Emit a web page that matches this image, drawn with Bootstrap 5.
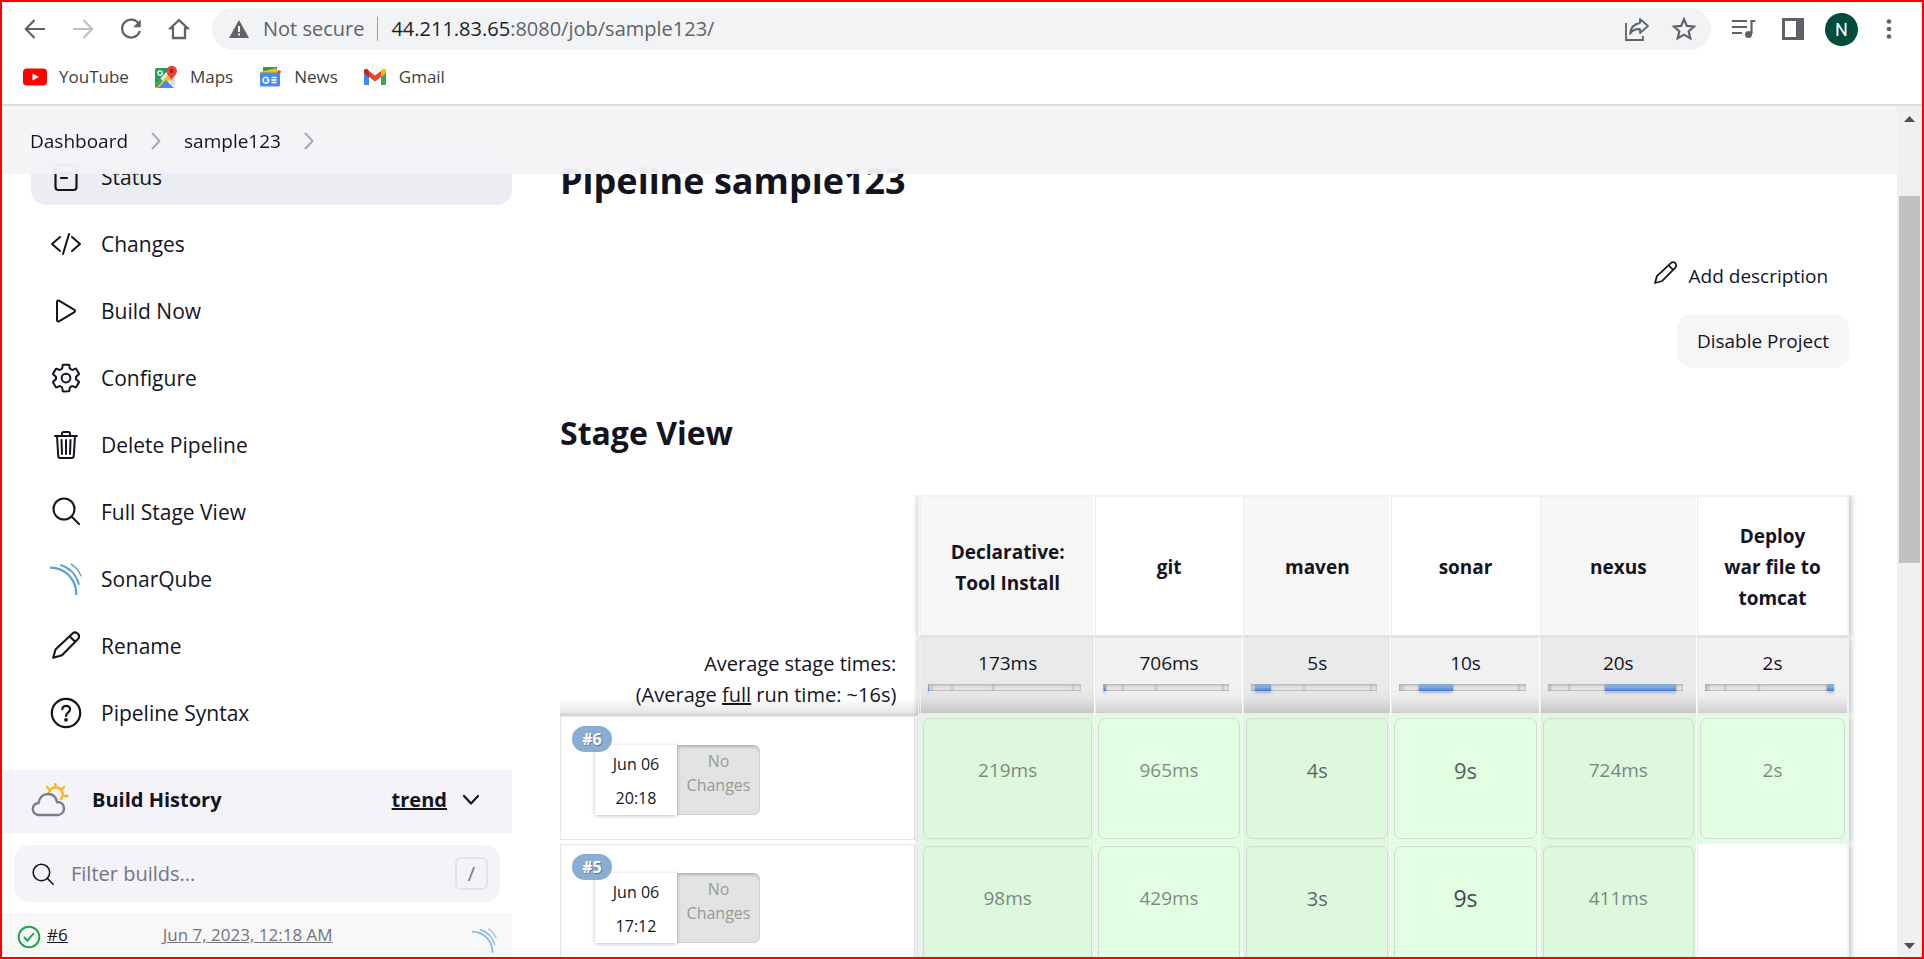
<!DOCTYPE html>
<html lang="en">
<head>
<meta charset="utf-8">
<meta name="viewport" content="width=device-width, initial-scale=1">
<title>sample123 [Jenkins]</title>
<link href="https://cdn.jsdelivr.net/npm/bootstrap@5.3.0/dist/css/bootstrap.min.css" rel="stylesheet">
<style>
  :root { --ink: #14141f; --soft: #f3f3f8; --chrome: #5f6368; }
  body { font-family: "Open Sans", "Noto Sans", sans-serif; font-size: 19px; line-height: 30px; color: var(--ink); background: #fff; }
  svg { flex: none; display: block; }
  a { color: inherit; }
  .window { height: 100vh; border: 2px solid red; overflow: hidden; }

  /* browser chrome */
  .browser-bar { color: var(--chrome); padding: 6px 23px 0 21px; height: 48px; }
  .browser-bar button, .plain-btn { border: 0; background: none; padding: 0; color: inherit; }
  .browser-bar .nav-forward { color: #bdc1c6; }
  .nav-icons { gap: 24px; margin-right: 21px; }
  .tool-icons { gap: 21px; margin-left: 20px; }
  .omnibox { background: #f1f3f4; border-radius: 21px; height: 42px; padding: 0 14px 0 16px; gap: 13px; font-size: 20px; }
  .url-host { color: #202124; }
  .url-line { width: 1px; height: 24px; background: #9aa0a6; }
  .browser-bar .avatar-dot { width: 33px; height: 33px; border-radius: 50%; background: #004d40; color: #fff; font: 18px/33px Roboto, sans-serif; text-align: center; }
  .bookmarks { height: 56px; padding: 0 21px; gap: 25px; font-size: 17px; color: #3c4043; border-bottom: 2px solid #dcdddc; }
  .bookmarks a { gap: 12px; }

  /* page */
  .crumbs { height: 68px; padding: 2px 28px 0; gap: 23px; background: rgba(244, 244, 247, .9); backdrop-filter: blur(15px); position: relative; z-index: 2; font-size: 19px; }
  .scroll-area { margin-top: -25px; gap: 48px; }
  .side { width: 510px; }
  .task { height: 56px; margin: 0 0 11px 29px; padding-left: 19px; gap: 19px; border-radius: 15px; font-size: 21px; }
  .task.current { background: #ecedf3; }
  .task-list { margin-bottom: 29px; }
  .history-head { background: var(--soft); height: 63px; padding: 0 33px 3px 29px; font-size: 20px; }
  .history-head h2 { font-size: 20px; font-weight: 700; line-height: 30px; margin: 0 0 0 23px; }
  .filter-box { background: var(--soft); border-radius: 15px; height: 57px; margin: 12px; padding: 0 12px 0 18px; gap: 17px; font-size: 20px; }
  .filter-box input { border: 0; background: none; outline: 0; padding: 0; }
  .filter-box input::placeholder { color: #73738c; opacity: 1; }
  .key-hint { width: 33px; height: 33px; border: 2px solid #e3e3ec; border-radius: 6px; color: #73738c; font-size: 20px; line-height: 28px; text-align: center; background: none; padding: 0; font-family: inherit; }
  .build-row { background: #f8f8f8; border-top: 1px solid #f0f0f5; height: 60px; padding: 5px 15px 0; gap: 6px; font-size: 17px; }
  .build-when { color: #737378; margin-left: 89px; }
  .build-sonar { opacity: .7; }

  .content { padding-right: 48px; }
  h1 { font-size: 36px; line-height: 48px; font-weight: 700; margin: 8px 0 52px; }
  h3.section { font-size: 32px; line-height: 44px; font-weight: 700; margin: 43px 0 40px; }
  .desc-link { font-size: 19px; padding-right: 21px; gap: 12px; line-height: 38px; }
  .disable-btn { background: #f6f6f9; border-radius: 15px; height: 54px; padding: 0 20px; margin-top: 19px; font-size: 19px; color: var(--ink); border: 0; }

  .stages { width: 100%; table-layout: fixed; border-collapse: separate; border-spacing: 0; line-height: 31px; }
  .stages th, .stages td { padding: 0; text-align: center; }
  .stages .st { border-left: 1px solid #ececec; border-right: 1px solid #fff; }
  .stages .st.first { box-shadow: -2px 0 4px rgba(0,0,0,.14); border-left: 3px double #efefef; clip-path: inset(0 0 0 -8px); }
  .stages .st.last { box-shadow: 3px 0 5px rgba(0,0,0,.2); border-right: 2px solid #f2f2f2; clip-path: inset(0 -10px 0 0); }
  .stages thead .st { height: 143px; vertical-align: middle; font-weight: 700; border-top: 2px solid #f1f1f1; border-bottom: 3px solid #e2e2e2; padding: 3px 16px 0; }
  .stages .odd { background: #f7f7f7; }
  .avg-row .st { height: 78px; background: linear-gradient(#f1f1f1 65%, #ededed 80%, #cfcfcf); vertical-align: top; padding: 10px 0 0; border-bottom: 3px double #eee; }
  .avg-row .st.odd { background: linear-gradient(#eaeaea 65%, #e4e4e4 80%, #c6c6c6); }
  .avg-row .legend { height: 78px; text-align: right; vertical-align: top; padding: 10px 22px 0 0; font-size: 20px; border-bottom: 3px solid #d9d9d9; background: linear-gradient(#fff 80%, #e6e6e6); }
  .times { height: 7px; margin: 5px 13px 0 7px; }
  .times i { min-width: 1px; height: 7px; background: #e4e4e4; box-shadow: inset 0 1px 3px rgba(0,0,0,.28), inset 0 -1px 0 #c9c9c9; }
  .times i.on { background: linear-gradient(#86abd6 45%, #3f78dc); box-shadow: 0 2px 3px rgba(60,90,150,.35); }
  .run-cell { height: 128px; vertical-align: top; }
  .run-box { height: 124px; margin-right: 3px; margin-bottom: 2px; border: 1px solid #e6e6e6; padding: 28px 0 0 34px; position: relative; text-align: center; font-size: 16px; line-height: 34px; }
  .run-badge { position: absolute; left: 11px; top: 9px; height: 26px; width: 40px; border-radius: 13px; background: #8aadd2; color: #fff; font-size: 16px; line-height: 26px; font-weight: 700; text-shadow: 1px 1px 1px rgba(0,0,0,.3); }
  .run-date { width: 82px; height: 70px; padding-top: 2px; background: #fff; box-shadow: 0 1px 4px rgba(0,0,0,.25); }
  .run-changes { width: 83px; height: 70px; border-radius: 0 7px 7px 0; background: #e3e3e3; color: #999; line-height: 24px; padding: 4px 0 0; box-shadow: inset 1px 2px 3px rgba(0,0,0,.22), inset -1px -1px 0 #d5d5d5; }
  .stages td.ok { background: #e3ffe3; height: 128px; border-bottom: 3px double #efefef; padding: 2px; }
  .stages td.ok.odd { background: #ddf8dd; }
  .ok-box { height: 121px; border: 1px solid #cfdccf; border-radius: 7px; padding-top: 36px; }
  .ok-box span { opacity: .5; }
  .ok-box .mid { opacity: .65; font-size: 20px; }
  .ok-box .big { opacity: .7; font-size: 22px; }
  .ok-box .huge { opacity: .8; font-size: 23px; }

  .scroll-track { width: 25px; background: #f0f0f0; padding: 10px 2px 8px; }
  .scroll-thumb { flex: 0 0 44%; background: #c1c1c1; width: 21px; margin-top: 74px; }
</style>
</head>
<body>
<svg width="0" height="0" class="position-absolute" aria-hidden="true">
  <symbol id="i-pencil" viewBox="0 0 28 28"><path d="M1.200 26.800 L3.500 18.500 L20.500 2.500 A3.900 3.900 0 0 1 26 8 L10 24.300 Z M17.800 5.400 L23 10.600" fill="none" stroke="currentColor" stroke-width="2.100" stroke-linejoin="round"/></symbol>
  <symbol id="i-search" viewBox="0 0 28 28"><circle cx="12" cy="12" r="10.500" fill="none" stroke="currentColor" stroke-width="2"/><path d="M19.500 19.500 27 27" stroke="currentColor" stroke-width="2" stroke-linecap="round"/></symbol>
  <symbol id="i-sonar" viewBox="0 0 34 34"><g fill="none" stroke="#549fd8"><path d="M0 5C16 5 28 17 28 34" stroke-width="2.300"/><path d="M11 2C21 5 28 13 31 23" stroke-width="1.900"/><path d="M22 1C27 4 31 9 33 14" stroke-width="1.500"/></g></symbol>
  <symbol id="i-chev" viewBox="0 0 10 18"><path d="M1.500 1.500 8.500 9l-7 7.500" fill="none" stroke="#a9a9bb" stroke-width="2" stroke-linecap="round" stroke-linejoin="round"/></symbol>
</svg>

<div class="window d-flex flex-column">
  <header>
    <div class="browser-bar d-flex align-items-center">
      <div class="nav-icons d-flex align-items-center">
        <button aria-label="Back"><svg width="24" height="24" viewBox="0 0 24 24" fill="none" stroke="currentColor" stroke-width="2.200"><path d="M22 12H3M11.500 3 2.800 12l8.700 9"/></svg></button>
        <button class="nav-forward" aria-label="Forward"><svg width="24" height="24" viewBox="0 0 24 24" fill="none" stroke="currentColor" stroke-width="2.200"><path d="M2 12h19M12.500 3l8.700 9-8.700 9"/></svg></button>
        <button aria-label="Reload"><svg width="24" height="24" viewBox="0 0 24 24" fill="none" stroke="currentColor" stroke-width="2.300"><path d="M20 7.200A9 9 0 1 0 20.800 14"/><path d="M21.800 2.500v7.800H14z" fill="currentColor" stroke="none"/></svg></button>
        <button aria-label="Home"><svg width="24" height="24" viewBox="0 0 24 24" fill="none" stroke="currentColor" stroke-width="2.300"><path d="M12 3 3.500 11.200H6V21h12v-9.800h2.500z"/></svg></button>
      </div>
      <div class="omnibox d-flex align-items-center flex-grow-1">
        <svg width="22" height="20" viewBox="0 0 22 20"><path d="M11 1 21 19H1z" fill="#5f6368"/><path d="M11 7v6M11 14.500v2" stroke="#f1f3f4" stroke-width="2"/></svg>
        <span>Not secure</span>
        <span class="url-line"></span>
        <span class="flex-grow-1"><span class="url-host">44.211.83.65</span>:8080/job/sample123/</span>
        <button aria-label="Share" class="me-2"><svg width="26" height="26" viewBox="0 0 26 26" fill="none" stroke="currentColor" stroke-width="1.800"><path d="M2 7v17h17v-4"/><path d="M16 3l8 7-8 7v-4c-5-.200-8 1.500-10 5 .500-6 4-10 10-11z" stroke-linejoin="round"/></svg></button>
        <button aria-label="Bookmark"><svg width="26" height="26" viewBox="0 0 24 24" fill="none" stroke="currentColor" stroke-width="2"><path d="M12 3l2.700 6.100 6.600.600-5 4.400 1.500 6.500L12 17.200l-5.800 3.400 1.500-6.500-5-4.400 6.600-.600z"/></svg></button>
      </div>
      <div class="tool-icons d-flex align-items-center">
        <button aria-label="Media" class="me-1"><svg width="26" height="24" viewBox="0 0 26 24" fill="none" stroke="currentColor" stroke-width="2.200"><path d="M1 4h15M1 10h15M1 16h10"/><path d="M24.500 4H20.500v13"/><circle cx="17.500" cy="17.500" r="3.500" fill="currentColor" stroke="none"/></svg></button>
        <button aria-label="Side panel"><svg width="22" height="22" viewBox="0 0 22 22"><path d="M0 0h22v22H0zM3 3v16h11V3z" fill="currentColor" fill-rule="evenodd"/></svg></button>
        <button class="avatar-dot" aria-label="Profile">N</button>
        <button aria-label="Menu"><svg width="20" height="22" viewBox="0 0 20 22" fill="currentColor"><circle cx="10" cy="3.500" r="2.300"/><circle cx="10" cy="11" r="2.300"/><circle cx="10" cy="18.500" r="2.300"/></svg></button>
      </div>
    </div>
    <nav class="bookmarks d-flex align-items-center">
      <a href="#" class="d-flex align-items-center text-decoration-none"><svg width="24" height="18" viewBox="0 0 24 18"><rect width="24" height="17" y=".500" rx="4" fill="#f00"/><path d="M9.500 5.500v7L16 9z" fill="#fff"/></svg>YouTube</a>
      <a href="#" class="d-flex align-items-center text-decoration-none"><svg width="24" height="24" viewBox="0 0 24 24"><path d="M3 3h18v18a2 2 0 0 1-2 2H3a2 2 0 0 1-2-2V5a2 2 0 0 1 2-2z" fill="#e8eaed"/><path d="M1 5a2 2 0 0 1 2-2h13L1 19z" fill="#1e9e57"/><path d="M1 18 6 13l3 3-6 7a2 2 0 0 1-2-2z" fill="#34a853"/><path d="m4 21 13-14 4 4-8 6-2-2-7 8z" fill="#fbbc04"/><path d="M4 23 11.800 15l8 8z" fill="#4a89f3"/><path d="m14 15 7-5v11z" fill="#dadce0"/><circle cx="6" cy="8" r="2.200" fill="none" stroke="#fff" stroke-width="1.300"/><path d="M17.500 16c-.500-4-5-5.500-5-10a5 5 0 0 1 10.500 0c0 4.500-5 6-5.500 10z" fill="#ea4335"/><circle cx="17.700" cy="6" r="1.900" fill="#a11"/></svg>Maps</a>
      <a href="#" class="d-flex align-items-center text-decoration-none"><svg width="24" height="22" viewBox="0 0 24 22"><path d="M5 1h14v8H5z" fill="#1e9e57"/><path d="M2 6 18 2l2 6H3z" fill="#fbbc04"/><path d="M20 4l3 1-2 7h-4z" fill="#ea4335"/><rect x="2" y="6.500" width="20" height="14" rx="1.500" fill="#4a8af4"/><path d="M10.500 12.500A3 3 0 1 0 11 14H8.500" fill="none" stroke="#fff" stroke-width="1.500"/><path d="M13.500 11.500h5M13.500 14h5M13.500 16.500h5" stroke="#fff" stroke-width="1.300"/></svg>News</a>
      <a href="#" class="d-flex align-items-center text-decoration-none"><svg width="24" height="18" viewBox="0 0 24 18"><path d="M1 4v12a1 1 0 0 0 1 1h4V7z" fill="#4285f4"/><path d="M23 4v12a1 1 0 0 1-1 1h-4V7z" fill="#34a853"/><path d="M18 3v6l5-4V3c0-2-2-3-4-1.500z" fill="#fbbc04"/><path d="M1 3v2l5 4V3L5 1.500C3 0 1 1 1 3z" fill="#c5221f"/><path d="M6 3v6l6 4.500L18 9V3l-6 4.500z" fill="#ea4335"/></svg>Gmail</a>
    </nav>
  </header>

  <div class="d-flex flex-grow-1 overflow-hidden">
    <div class="flex-grow-1 overflow-hidden">
      <nav class="crumbs d-flex align-items-center" aria-label="Breadcrumb">
        <a href="#" class="text-decoration-none">Dashboard</a>
        <svg width="10" height="18"><use href="#i-chev"/></svg>
        <a href="#" class="text-decoration-none">sample123</a>
        <svg width="10" height="18"><use href="#i-chev"/></svg>
      </nav>
      <div class="scroll-area d-flex">
        <aside class="side flex-shrink-0">
          <nav class="task-list">
            <a href="#" class="task current d-flex align-items-center text-decoration-none"><svg width="32" height="32" viewBox="0 0 32 32" fill="none" stroke="currentColor" stroke-width="2.200" stroke-linecap="round"><rect x="5.500" y="4" width="21" height="25" rx="3"/><path d="M11 12h10M11 17h6"/></svg>Status</a>
            <a href="#" class="task d-flex align-items-center text-decoration-none"><svg width="32" height="32" viewBox="0 0 512 512" fill="none" stroke="currentColor" stroke-width="32" stroke-linecap="round" stroke-linejoin="round"><path d="M160 368 32 256 160 144M352 368 480 256 352 144M304 96 208 416"/></svg>Changes</a>
            <a href="#" class="task d-flex align-items-center text-decoration-none"><svg width="32" height="32" viewBox="0 0 512 512" fill="none" stroke="currentColor" stroke-width="32"><path d="M112 111v290c0 17.440 17 28.520 31 20.160l247.900-148.370c12.120-7.250 12.120-26.330 0-33.580L143 90.840c-14-8.360-31 2.720-31 20.160z"/></svg>Build Now</a>
            <a href="#" class="task d-flex align-items-center text-decoration-none"><svg width="32" height="32" viewBox="0 0 512 512" fill="none" stroke="currentColor" stroke-width="32" stroke-linecap="round" stroke-linejoin="round"><circle cx="256" cy="256" r="70"/><path d="M416.390 256a154.340 154.340 0 01-1.530 20.790l45.210 35.460a10.810 10.810 0 012.450 13.750l-42.770 74a10.810 10.810 0 01-13.140 4.590l-44.900-18.080a16.110 16.110 0 00-15.170 1.750A164.480 164.480 0 01325 400.800a15.940 15.940 0 00-8.820 12.140l-6.730 47.890a11.080 11.080 0 01-10.680 9.170h-85.540a11.110 11.110 0 01-10.690-8.870l-6.720-47.820a16.070 16.070 0 00-9-12.220 155.300 155.300 0 01-21.460-12.570 16 16 0 00-15.110-1.710l-44.890 18.070a10.810 10.810 0 01-13.140-4.580l-42.770-74a10.800 10.800 0 012.450-13.750l38.210-30a16.050 16.050 0 006-14.080c-.360-4.170-.580-8.330-.580-12.500s.210-8.270.580-12.350a16 16 0 00-6.070-13.940l-38.190-30A10.810 10.810 0 0149.480 186l42.770-74a10.810 10.810 0 0113.140-4.590l44.900 18.080a16.110 16.110 0 0015.170-1.750A164.480 164.480 0 01187 111.200a15.940 15.940 0 008.820-12.140l6.730-47.890A11.080 11.080 0 01213.230 42h85.540a11.110 11.110 0 0110.690 8.870l6.720 47.820a16.070 16.070 0 009 12.220 155.300 155.300 0 0121.460 12.570 16 16 0 0015.110 1.710l44.890-18.070a10.810 10.810 0 0113.140 4.580l42.770 74a10.800 10.800 0 01-2.450 13.750l-38.210 30a16.050 16.050 0 00-6.050 14.080c.330 4.140.550 8.300.550 12.470z"/></svg>Configure</a>
            <a href="#" class="task d-flex align-items-center text-decoration-none"><svg width="32" height="32" viewBox="0 0 512 512" fill="none" stroke="currentColor" stroke-width="32" stroke-linecap="round" stroke-linejoin="round"><path d="M112 112l20 320c.950 18.490 14.400 32 32 32h184c17.670 0 30.870-13.510 32-32l20-320M80 112h352M192 112V72a23.930 23.930 0 0124-24h80a23.930 23.930 0 0124 24v40M256 176v224M184 176l8 224M328 176l-8 224"/></svg>Delete Pipeline</a>
            <a href="#" class="task d-flex align-items-center text-decoration-none"><svg width="32" height="32" viewBox="-2 -1 32 32"><use href="#i-search" width="28" height="28"/></svg>Full Stage View</a>
            <a href="#" class="task d-flex align-items-center text-decoration-none"><svg width="32" height="34"><use href="#i-sonar"/></svg>SonarQube</a>
            <a href="#" class="task d-flex align-items-center text-decoration-none"><svg width="32" height="32" viewBox="-2 -1 32 32"><use href="#i-pencil" width="28" height="28"/></svg>Rename</a>
            <a href="#" class="task d-flex align-items-center text-decoration-none"><svg width="32" height="32" viewBox="0 0 32 32" fill="none" stroke="currentColor" stroke-width="2.200" stroke-linecap="round"><circle cx="16" cy="16" r="14.200"/><path d="M12.300 12.200c.100-4.500 7.700-4.300 7.700.200 0 3-4 3.200-4 6.600"/><circle cx="16" cy="22.800" r=".800" fill="currentColor"/></svg>Pipeline Syntax</a>
          </nav>
          <div class="history-head d-flex align-items-center">
            <svg width="38" height="34" viewBox="0 0 38 34" fill="none" stroke-width="2.400" stroke-linecap="round"><path d="M18 9.500A7 7 0 1 1 30 16M24.500 1v3M16 4l2 2.200M33 4l-2 2.200M34 13h2.500" stroke="#ffb21a"/><path d="M8 32a6 6 0 0 1-.500-12c1-6 5-9 9.500-9s8 3 9 8c4 0 7 2.500 7 6.500s-3 6.500-6.500 6.500z" stroke="#7a7a93"/></svg>
            <h2>Build History</h2>
            <a href="#" class="fw-bold ms-auto me-3">trend</a>
            <button class="plain-btn" aria-label="Collapse"><svg width="16" height="12" viewBox="1 0 16 12" fill="none" stroke="currentColor" stroke-width="2.200" stroke-linecap="round" stroke-linejoin="round"><path d="m2 2 7 7.500L16 2"/></svg></button>
          </div>
          <div class="filter-box d-flex align-items-center">
            <svg width="22" height="22"><use href="#i-search"/></svg>
            <input type="text" class="flex-grow-1" placeholder="Filter builds..." aria-label="Filter builds">
            <button class="key-hint">/</button>
          </div>
          <div class="build-row d-flex align-items-start">
            <svg class="mt-1" width="24" height="26" viewBox="0 0 24 26" fill="none" stroke="#1ea64b" stroke-width="2" stroke-linecap="round" stroke-linejoin="round"><circle cx="12" cy="13" r="10.300"/><path d="m7.500 13.500 3 3.200 5.800-7"/></svg>
            <a href="#">#6</a>
            <a href="#" class="build-when">Jun 7, 2023, 12:18 AM</a>
            <svg class="build-sonar ms-auto mt-2" width="25" height="25"><use href="#i-sonar"/></svg>
          </div>
        </aside>

        <main class="content flex-grow-1">
          <h1>Pipeline sample123</h1>
          <div class="d-flex flex-column align-items-end">
            <a href="#" class="desc-link d-flex text-decoration-none"><svg width="23" height="23" class="mt-1"><use href="#i-pencil"/></svg>Add description</a>
            <button class="disable-btn">Disable Project</button>
          </div>
          <h3 class="section">Stage View</h3>
          <table class="stages">
            <colgroup><col style="width:27.800%"><col style="width:13.700%"><col style="width:11.500%"><col style="width:11.500%"><col style="width:11.500%"><col style="width:12.200%"><col></colgroup>
            <thead>
              <tr><td></td><th class="st first odd">Declarative:<br>Tool Install</th><th class="st">git</th><th class="st odd">maven</th><th class="st">sonar</th><th class="st odd">nexus</th><th class="st last">Deploy<br>war file to<br>tomcat</th></tr>
            </thead>
            <tbody id="rows"></tbody>
          </table>
        </main>
      </div>
    </div>
    <div class="scroll-track d-flex flex-column align-items-center" aria-hidden="true">
      <svg width="11" height="6" viewBox="0 0 11 6"><path d="M0 6 5.500 0 11 6z" fill="#505050"/></svg>
      <div class="scroll-thumb"></div>
      <svg class="mt-auto" width="11" height="6" viewBox="0 0 11 6"><path d="M0 0h11L5.500 6z" fill="#505050"/></svg>
    </div>
  </div>
</div>

<script>
  // Average time of each stage in seconds, with its label
  const stages = [[0.173, '173ms'], [0.706, '706ms'], [5, '5s'], [10, '10s'], [20, '20s'], [2, '2s']];
  const runs = [
    { id: 6, day: 'Jun 06', time: '20:18', cells: [['219ms'], ['965ms'], ['4s', 'mid'], ['9s', 'big'], ['724ms'], ['2s']] },
    { id: 5, day: 'Jun 06', time: '17:12', cells: [['98ms'], ['429ms'], ['3s', 'mid'], ['9s', 'huge'], ['411ms'], null] }
  ];
  const total = stages.reduce((sum, s) => sum + s[0], 0);
  const cls = i => 'st' + (i % 2 ? '' : ' odd') + (i === 0 ? ' first' : '') + (i === stages.length - 1 ? ' last' : '');
  const bar = on => '<div class="times d-flex">' + stages.map((s, i) =>
    `<i class="${i === on ? 'on' : ''}" style="width:${(s[0] / total * 100).toFixed(1)}%"></i>`).join('') + '</div>';
  let html = '<tr class="avg-row"><td class="legend">Average stage times:<br>(Average <u>full</u> run time: ~16s)</td>' +
    stages.map((s, i) => `<td class="${cls(i)}">${s[1]}${bar(i)}</td>`).join('') + '</tr>';
  for (const r of runs) {
    html += `<tr><td class="run-cell"><div class="run-box"><a href="#" class="run-badge text-decoration-none">#${r.id}</a>
      <div class="d-flex"><div class="run-date">${r.day}<br>${r.time}</div><div class="run-changes">No<br>Changes</div></div></div></td>` +
      r.cells.map((c, i) => c ? `<td class="${cls(i)} ok"><div class="ok-box"><span class="${c[1] || ''}">${c[0]}</span></div></td>`
        : `<td class="${cls(i)}"></td>`).join('') + '</tr>';
  }
  document.getElementById('rows').innerHTML = html;
</script>
<script src="https://cdn.jsdelivr.net/npm/bootstrap@5.3.0/dist/js/bootstrap.bundle.min.js"></script>
</body>
</html>
